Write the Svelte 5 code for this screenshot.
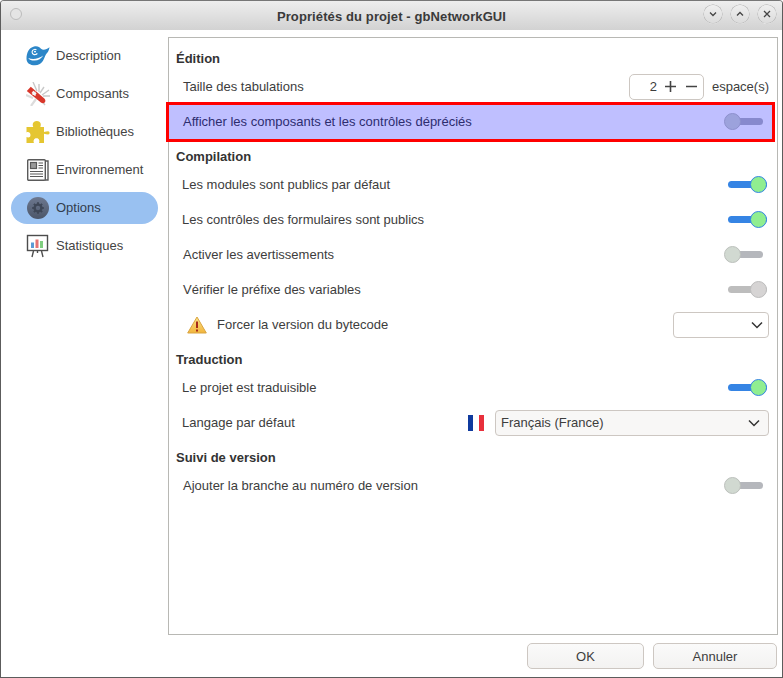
<script>
  const nav = ['Description', 'Composants', 'Bibliothèques', 'Environnement', 'Options', 'Statistiques'];
</script>

<div class="window">
  <header class="titlebar">
    <span class="dot"></span>
    <span class="title">Propriétés du projet - gbNetworkGUI</span>
    <div class="winbtns">
      <span class="wb"><svg viewBox="0 0 18 18" width="18" height="18"><path d="M6 7.500 9 10.500 12 7.500" /></svg></span>
      <span class="wb"><svg viewBox="0 0 18 18" width="18" height="18"><path d="M6 10.500 9 7.500 12 10.500" /></svg></span>
      <span class="wb"><svg viewBox="0 0 18 18" width="18" height="18"><path d="M6 6 12 12M12 6 6 12" /></svg></span>
    </div>
  </header>

  <div class="body">
    <aside class="side">
      {#each nav as item, i}
        <div class="nav" class:sel={i === 4}>
          <span class="ico">
            {#if i === 0}
              <svg viewBox="0 0 24 24" width="24" height="24">
                <g transform="translate(0 -.4) scale(1 .94)">
                  <path fill="#2c86c8" d="M.5 16C.5 10 3 4.500 8 3.200c3.500-.9 5.500.6 7 2.300 2 2 5.500 1 8.500-1.500-.5 4.500-3 6.500-4 8.500C17.500 17.500 16 23 9 23 4 23 .5 20.500.5 16Z"/>
                  <path fill="none" stroke="#fff" stroke-width="1.100" d="M10.500 6.600a2.800 2.800 0 1 0 .8 3.800"/>
                  <circle cx="9" cy="8.500" r="1" fill="#fff"/>
                  <path fill="#fff" d="M2.300 15.300c4 2 10 1.300 15-2.600-2 3.300-5 5.300-8.700 5.400-3 .1-5.200-.9-6.300-2.800Z"/>
                </g>
              </svg>
            {:else if i === 1}
              <svg viewBox="0 0 24 24" width="24" height="24">
                <path stroke="#c9c9c9" stroke-width="1.400" fill="none" d="M7 0l4 9M13 2l0 8M18 5l-4 6M23 8l-7 5M24 14l-7 0M19 23l-4-5"/>
                <path stroke="#dcdcdc" stroke-width="2.200" fill="none" d="M0 13l7 3M5 24l5-7"/>
                <path fill="#d8372b" d="M.8 9 4.800 4.800l13.500 11.600c1.400 1.300 1.300 3 .4 4-1 1-2.500 1-3.800 0Z"/>
                <path fill="#f5f5f5" d="M7.300 10.800l1.300-1 .8 1 1.300-.1.100 1.300 1 .8-1 1 .1 1.300-1.300.1-.8-1-1.300.1-.1-1.300-1-.9 1-.9Z" transform="translate(-.6 -.6) scale(.95)"/>
              </svg>
            {:else if i === 2}
              <svg viewBox="0 0 24 24" width="24" height="24">
                <path fill="#e5c631" d="M.5 7h6.800C6.300 5.300 6.300 1 10.800 1s4.500 4.300 3.500 6H18v5c1.300-.5 2.700-.7 4.200-.7 1.800 0 1.800 3.200 0 3.200-1.500 0-2.900-.2-4.200-.7V23h-5c1-2 .3-4.800-2.500-4.800S7 21 8 23H.5v-6c1.500 1 4 .6 4-2S2 11.500.5 12.500Z"/>
              </svg>
            {:else if i === 3}
              <svg viewBox="0 0 24 24" width="24" height="24" fill="none" stroke="#5a5a5a">
                <path fill="#fff" stroke-width="1.400" d="M19 3h3v19h-3"/>
                <rect x="1.700" y="1.700" width="17.600" height="20.600" rx="1" fill="#fff" stroke-width="1.400"/>
                <rect x="4.500" y="4.500" width="6" height="6" fill="#9a9a9a" stroke-width="1.200"/>
                <path stroke-width="1.100" d="M12.500 5h4.500M12.500 7.500h4.500M12.500 10h4.500M4 13.500h13M4 16h13M4 18.500h13"/>
              </svg>
            {:else if i === 4}
              <svg viewBox="0 0 24 24" width="24" height="24">
                <defs><linearGradient id="gr" x1="0" y1="0" x2="0" y2="1"><stop offset="0" stop-color="#6d788f"/><stop offset="1" stop-color="#4c5669"/></linearGradient></defs>
                <circle cx="12" cy="12" r="11" fill="url(#gr)"/>
                <g fill="none" stroke="#3e4757">
                  <circle cx="12" cy="12" r="3.400" stroke-width="2.400"/>
                  <path stroke-width="2" d="M12 6.200v2.200M12 15.600v2.200M6.200 12h2.200M15.600 12h2.200M7.900 7.900l1.500 1.500M14.600 14.600l1.500 1.500M16.100 7.900l-1.500 1.500M9.400 14.600l-1.500 1.500"/>
                </g>
              </svg>
            {:else}
              <svg viewBox="0 0 24 24" width="24" height="24" fill="none" stroke="#4d4d4d">
                <rect x="1.500" y="1.500" width="20" height="15" fill="#fff" stroke-width="1.400"/>
                <rect x="5" y="8.500" width="3" height="5.500" fill="#5b9bd5" stroke="none"/>
                <rect x="9.500" y="5.500" width="3" height="8.500" fill="#e57373" stroke="none"/>
                <rect x="14" y="7" width="3" height="7" fill="#7fce7f" stroke="none"/>
                <path stroke-width="1.400" d="M7.500 17 6 23M15.500 17l1.500 6M11.500 17v2"/>
              </svg>
            {/if}
          </span>
          <span class="lbl">{item}</span>
        </div>
      {/each}
    </aside>

    <main class="panel">
      <h3>Édition</h3>
      <div class="row">
        <span>Taille des tabulations</span>
        <span class="spacer"></span>
        <div class="spin">
          <span class="val">2</span>
          <svg viewBox="0 0 11 11" width="11" height="11"><path d="M5.500 0v11M0 5.500h11"/></svg>
          <svg class="minus" viewBox="0 0 11 11" width="11" height="11"><path d="M0 5.500h11"/></svg>
        </div>
        <span class="unit">espace(s)</span>
      </div>
      <div class="row marked">
        <span class="up">Afficher les composants et les contrôles dépréciés</span>
        <span class="spacer"></span>
        <span class="sw off up"><i></i></span>
        <span class="overlay"></span>
      </div>

      <h3 class="next">Compilation</h3>
      <div class="row tight"><span>Les modules sont publics par défaut</span><span class="spacer"></span><span class="sw on"><i></i></span></div>
      <div class="row tight"><span>Les contrôles des formulaires sont publics</span><span class="spacer"></span><span class="sw on"><i></i></span></div>
      <div class="row"><span>Activer les avertissements</span><span class="spacer"></span><span class="sw off"><i></i></span></div>
      <div class="row"><span>Vérifier le préfixe des variables</span><span class="spacer"></span><span class="sw dis"><i></i></span></div>
      <div class="row">
        <svg class="warn" viewBox="0 0 20 18" width="20" height="18">
          <defs><linearGradient id="wg" x1="0" y1="0" x2="0" y2="1"><stop offset="0" stop-color="#fbe38a"/><stop offset="1" stop-color="#f2b53c"/></linearGradient></defs>
          <path d="M10 1 19.300 17H.7Z" fill="url(#wg)" stroke="#d9a441" stroke-linejoin="round"/>
          <path d="M10 5.500v6.500" stroke="#a52a1a" stroke-width="2"/><rect x="9" y="13.500" width="2" height="2" fill="#a52a1a"/>
        </svg>
        <span>Forcer la version du bytecode</span>
        <span class="spacer"></span>
        <div class="combo small">
          <svg viewBox="0 0 12 8" width="12" height="8"><path d="M1 1.500 6 6.500 11 1.500"/></svg>
        </div>
      </div>

      <h3 class="next">Traduction</h3>
      <div class="row tight"><span>Le projet est traduisible</span><span class="spacer"></span><span class="sw on"><i></i></span></div>
      <div class="row tight">
        <span>Langage par défaut</span>
        <span class="spacer"></span>
        <span class="flag"><b></b><b></b><b></b></span>
        <div class="combo wide">
          <span>Français (France)</span>
          <svg viewBox="0 0 12 8" width="12" height="8"><path d="M1 1.500 6 6.500 11 1.500"/></svg>
        </div>
      </div>

      <h3 class="next">Suivi de version</h3>
      <div class="row"><span>Ajouter la branche au numéro de version</span><span class="spacer"></span><span class="sw off"><i></i></span></div>
    </main>
  </div>

  <footer class="foot">
    <button>OK</button>
    <button>Annuler</button>
  </footer>
</div>

<style>
  :global(body) { margin: 0; background: #fff; }
  .window {
    box-sizing: border-box; width: 783px; height: 678px;
    display: flex; flex-direction: column;
    border: 1px solid #5c5c5c; border-top-color: #777; border-radius: 4px 4px 0 0;
    background: #fff; overflow: hidden;
    font: 13px "Liberation Sans", Arial, sans-serif; color: #3d3d3d;
  }
  .titlebar {
    flex: none; height: 29px; position: relative;
    display: flex; align-items: center; justify-content: center;
    background: linear-gradient(#eeeeee, #d2d2d2);
  }
  .title { font-weight: 700; font-size: 13px; letter-spacing: .11px; color: #3a3a3a; padding-top: 2px; }
  .dot {
    position: absolute; left: 9px; top: 7px; width: 10px; height: 10px; border-radius: 50%;
    background: #e4e4e4; border: 1px solid #bcbcbc;
  }
  .winbtns { position: absolute; right: 6px; top: 4px; display: flex; gap: 9px; }
  .wb {
    width: 18px; height: 18px; border-radius: 50%; display: block;
    background: linear-gradient(#efefef, #dcdcdc); box-shadow: 0 0 0 .5px #a8a8a8, 0 1px 0 #f5f5f5;
  }
  .wb svg { display: block; fill: none; stroke: #444; stroke-width: 1.300; }

  .body { flex: 1; min-height: 0; display: flex; padding-top: 7px; }
  .side { flex: none; width: 167px; box-sizing: border-box; padding: 3px 10px 0; display: flex; flex-direction: column; gap: 6px; }
  .nav {
    height: 32px; border-radius: 16px; display: flex; align-items: center; gap: 6px;
    padding-left: 15px; color: #444;
  }
  .nav.sel { background: #99c1f1; color: #333d4d; }
  .ico { width: 24px; height: 24px; flex: none; }
  .ico svg { display: block; }
  .lbl { margin-top: -1px; }

  .panel {
    flex: none; width: 610px; height: 598px; box-sizing: border-box;
    border: 1px solid #b8b8b4; padding: 10px 8px 0 7px;
    display: flex; flex-direction: column;
  }
  h3 { margin: 0; height: 21px; line-height: 21px; font-size: 13px; font-weight: 700; color: #333; }
  h3.next { margin-top: 7px; }
  .row { height: 35px; flex: none; display: flex; align-items: center; padding-left: 7px; position: relative; }
  .row.tight { padding-left: 6px; }
  .up { margin-top: -1px; }
  .spacer { flex: 1; }

  .spin {
    box-sizing: border-box; width: 75px; height: 26px; border: 1px solid #cdc7c2; border-radius: 5px;
    display: flex; align-items: center; justify-content: flex-end; padding-right: 6px; gap: 8px;
  }
  .spin svg { fill: none; stroke: #444; stroke-width: 1.600; }
  .spin .minus { margin-left: 2px; }
  .unit { margin-left: 8px; }

  .sw { position: relative; display: block; height: 7px; border-radius: 4px; }
  .sw i { position: absolute; top: -5px; box-sizing: border-box; width: 17px; height: 17px; border-radius: 50%; }
  .sw.on, .sw.dis { width: 39px; margin-right: 2px; }
  .sw.off { width: 35px; margin-right: 6px; }
  .sw.on { background: #3584e4; }
  .sw.on i { right: 0; background: #90ee90; border: 1px solid #3584e4; }
  .sw.off { background: #b5b7bc; }
  .sw.off i { left: -4px; background: #d1d9d1; border: 1px solid #bcc0bc; }
  .sw.dis { background: #bdbdbd; }
  .sw.dis i { right: 0; background: #d6d4d4; border: 1px solid #bdbdbd; }

  .overlay {
    position: absolute; left: -10px; right: -6px; top: -2px; bottom: -3px; pointer-events: none;
    box-sizing: border-box; border: 3px solid #f00; background: rgba(0, 0, 255, .25);
  }

  .warn { margin: 0 10px 0 4px; }
  .combo {
    box-sizing: border-box; height: 26px; border: 1px solid #cdc7c2; border-radius: 4px; background: #f8f7f6;
    display: flex; align-items: center; justify-content: space-between; padding: 0 5px;
  }
  .combo svg { fill: none; stroke: #333; stroke-width: 1.500; margin-left: auto; }
  .combo.small { width: 96px; background: #fff; }
  .combo.wide { width: 274px; margin-left: 11px; padding-right: 8px; }
  .flag { display: flex; width: 16px; height: 16px; }
  .flag b { flex: 1; }
  .flag b:nth-child(1) { background: #0f3a9e; }
  .flag b:nth-child(2) { background: #fff; }
  .flag b:nth-child(3) { background: #e8303c; }

  .foot { flex: none; height: 42px; display: flex; justify-content: flex-end; gap: 9px; padding: 8px 5px 0 0; box-sizing: border-box; }
  button {
    box-sizing: border-box; height: 26px; width: 117px; margin: 0; padding: 0;
    border: 1px solid #cdc7c2; border-radius: 5px; background: linear-gradient(#fafafa, #f3f2f1);
    font: 13px "Liberation Sans", Arial, sans-serif; color: #3d3d3d;
  }
  button:last-child { width: 124px; }
</style>
